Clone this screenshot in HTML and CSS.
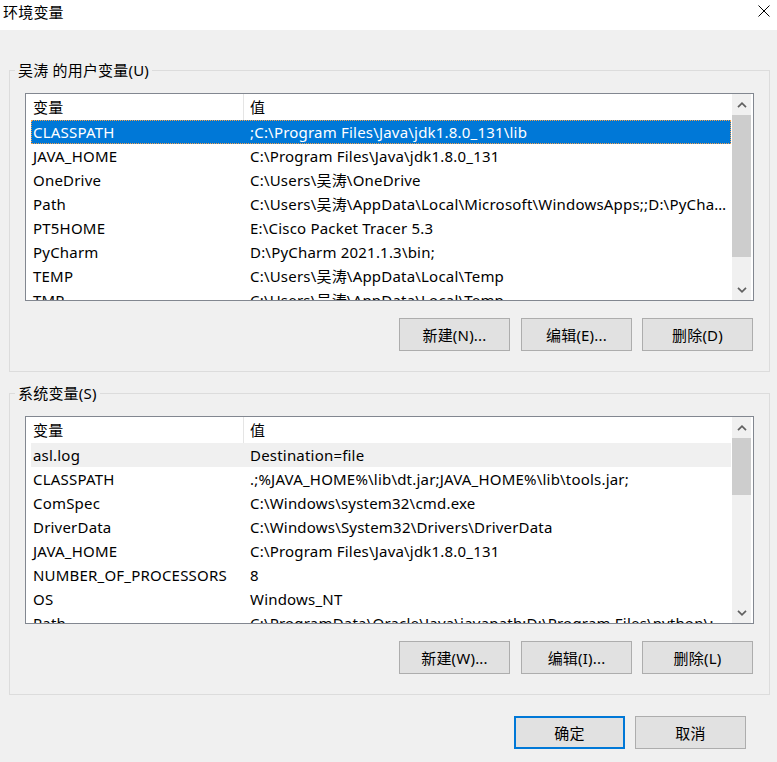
FILE: index.html
```html
<!DOCTYPE html>
<html lang="zh-CN">
<head>
<meta charset="UTF-8" />
<title>环境变量</title>
<link rel="stylesheet" href="styles.css">
</head>
<body>

<div class="titlebar">
  <span class="title">环境变量</span>
  <svg class="close" width="12" height="12" viewBox="0 0 12 12">
    <path d="M0.5 0.5 L11.5 11.5 M11.5 0.5 L0.5 11.5" stroke="#000" stroke-width="1" fill="none"/>
  </svg>
</div>

<fieldset class="group">
  <legend>吴涛 的用户变量(U)</legend>
  <div class="list">
    <div class="list-body">
      <div class="list-head">
        <div class="head-name">变量</div>
        <div class="head-value">值</div>
      </div>
      <div class="row selected"><div class="name">CLASSPATH</div><div class="value">;C:\Program Files\Java\jdk1.8.0_131\lib</div></div>
      <div class="row"><div class="name">JAVA_HOME</div><div class="value">C:\Program Files\Java\jdk1.8.0_131</div></div>
      <div class="row"><div class="name">OneDrive</div><div class="value">C:\Users\吴涛\OneDrive</div></div>
      <div class="row"><div class="name">Path</div><div class="value">C:\Users\吴涛\AppData\Local\Microsoft\WindowsApps;;D:\PyCharm 2021.1.3\bin;</div></div>
      <div class="row"><div class="name">PT5HOME</div><div class="value">E:\Cisco Packet Tracer 5.3</div></div>
      <div class="row"><div class="name">PyCharm</div><div class="value">D:\PyCharm 2021.1.3\bin;</div></div>
      <div class="row"><div class="name">TEMP</div><div class="value">C:\Users\吴涛\AppData\Local\Temp</div></div>
      <div class="row"><div class="name">TMP</div><div class="value">C:\Users\吴涛\AppData\Local\Temp</div></div>
    </div>
    <div class="scrollbar">
      <div class="arrow"><svg width="10" height="6" viewBox="0 0 10 6"><polyline points="1,5.2 5,1.2 9,5.2" /></svg></div>
      <div class="track"><div class="thumb thumb-user"></div></div>
      <div class="arrow"><svg width="10" height="6" viewBox="0 0 10 6"><polyline points="1,0.8 5,4.8 9,0.8" /></svg></div>
    </div>
  </div>
  <div class="buttons">
    <button>新建(N)...</button>
    <button>编辑(E)...</button>
    <button>删除(D)</button>
  </div>
</fieldset>

<fieldset class="group group-system">
  <legend>系统变量(S)</legend>
  <div class="list">
    <div class="list-body">
      <div class="list-head">
        <div class="head-name">变量</div>
        <div class="head-value">值</div>
      </div>
      <div class="row inactive"><div class="name">asl.log</div><div class="value">Destination=file</div></div>
      <div class="row"><div class="name">CLASSPATH</div><div class="value">.;%JAVA_HOME%\lib\dt.jar;JAVA_HOME%\lib\tools.jar;</div></div>
      <div class="row"><div class="name">ComSpec</div><div class="value">C:\Windows\system32\cmd.exe</div></div>
      <div class="row"><div class="name">DriverData</div><div class="value">C:\Windows\System32\Drivers\DriverData</div></div>
      <div class="row"><div class="name">JAVA_HOME</div><div class="value">C:\Program Files\Java\jdk1.8.0_131</div></div>
      <div class="row"><div class="name">NUMBER_OF_PROCESSORS</div><div class="value">8</div></div>
      <div class="row"><div class="name">OS</div><div class="value">Windows_NT</div></div>
      <div class="row"><div class="name">Path</div><div class="value">C:\ProgramData\Oracle\Java\javapath;D:\Program Files\python\;D:\Program Files\python\Scripts\</div></div>
    </div>
    <div class="scrollbar">
      <div class="arrow"><svg width="10" height="6" viewBox="0 0 10 6"><polyline points="1,5.2 5,1.2 9,5.2" /></svg></div>
      <div class="track"><div class="thumb thumb-system"></div></div>
      <div class="arrow"><svg width="10" height="6" viewBox="0 0 10 6"><polyline points="1,0.8 5,4.8 9,0.8" /></svg></div>
    </div>
  </div>
  <div class="buttons">
    <button>新建(W)...</button>
    <button>编辑(I)...</button>
    <button>删除(L)</button>
  </div>
</fieldset>

<div class="footer">
  <button class="primary">确定</button>
  <button>取消</button>
</div>

</body>
</html>
```

FILE: styles.css
```css
body {
  font-family: "Noto Sans", "Noto Sans CJK SC", sans-serif;
  font-size: 15px;
  letter-spacing: 0.2px;
  color: #000;
  background: #f0f0f0;
  margin: 0;
  padding: 0;
}

.titlebar {
  height: 30px;
  background: #ffffff;
  display: flex;
  justify-content: space-between;
  align-items: flex-start;
}

.title {
  line-height: 24px;
  padding-left: 3px;
}

.close {
  margin: 5px 7px 0 0;
}

.group {
  margin: 30px 7px 0 9px;
  padding: 13px 15px 20px;
  border: 1px solid #dcdcdc;
  min-width: 0;
}

.group-system {
  margin-top: 11px;
}

.group legend {
  line-height: 20px;
  padding: 0 3px;
  margin-left: -10px;
}

.list {
  height: 206px;
  border: 1px solid #828790;
  background: #ffffff;
  display: flex;
}

.list-body {
  flex: 1;
  min-width: 0;
  overflow: hidden;
}

.list-head {
  display: flex;
  height: 26px;
  line-height: 26px;
}

.head-name {
  width: 210px;
  padding-left: 7px;
  border-right: 1px solid #e5e5e5;
}

.head-value {
  flex: 1;
  padding-left: 6px;
}

.row {
  display: flex;
  height: 24px;
  line-height: 24px;
  margin-left: 5px;
  white-space: nowrap;
}

.row .name {
  width: 210px;
  padding-left: 2px;
  flex-shrink: 0;
}

.row .value {
  flex: 1;
  min-width: 0;
  padding-left: 7px;
  padding-right: 4px;
  overflow: hidden;
  text-overflow: ellipsis;
}

.row.selected {
  background: #0078d7;
  color: #ffffff;
  outline: 1px dotted #f3a04c;
  outline-offset: -1px;
}

.row.inactive {
  background: #f0f0f0;
}

.scrollbar {
  width: 19px;
  margin: 0 2px 0 1px;
  background: #f0f0f0;
  display: flex;
  flex-direction: column;
}

.arrow {
  height: 21px;
  display: flex;
  align-items: center;
  justify-content: center;
}

.arrow polyline {
  fill: none;
  stroke: #606060;
  stroke-width: 1.7;
}

.track {
  flex: 1;
}

.thumb {
  background: #cdcdcd;
}

.thumb-user {
  height: 142px;
}

.thumb-system {
  height: 57px;
}

.buttons {
  display: flex;
  justify-content: flex-end;
  gap: 10px;
  margin-top: 17px;
  padding-right: 1px;
}

.buttons button:first-child {
  margin-right: 1px;
}

button {
  font-family: inherit;
  font-size: 15px;
  letter-spacing: 0.2px;
  color: #000;
  width: 111px;
  height: 33px;
  padding: 0;
  background: #e1e1e1;
  border: 1px solid #adadad;
  border-radius: 0;
}

button.primary {
  border: 2px solid #0078d7;
}

.footer {
  display: flex;
  justify-content: flex-end;
  gap: 10px;
  margin-top: 21px;
  padding-right: 31px;
}
```
